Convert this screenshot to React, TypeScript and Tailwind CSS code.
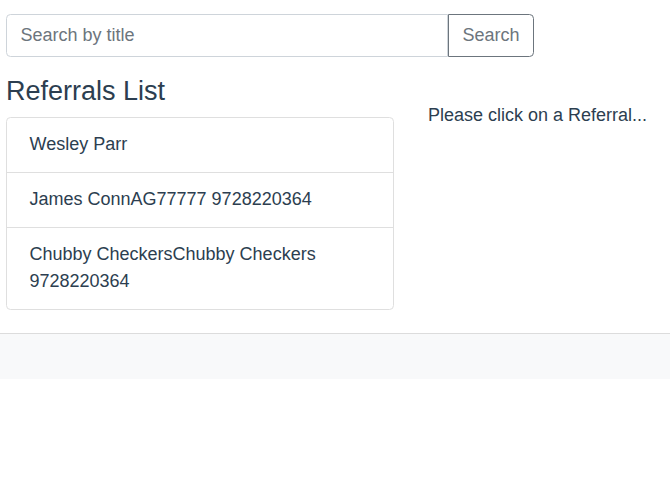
const referrals = [
  "Wesley Parr",
  "James ConnAG77777 9728220364",
  "Chubby CheckersChubby Checkers 9728220364",
];

export default function App() {
  return (
    <div className="min-h-[483px] bg-white text-[18px] leading-[1.5] text-[#2c3e50] font-['Liberation_Sans',Arial,sans-serif]">
      <div className="px-[6px] pt-[14px]">
        {/* search */}
        <div className="flex w-[528px] h-[42.5px]">
          <input
            type="text"
            placeholder="Search by title"
            className="flex-1 min-w-0 px-[13.5px] border border-[#ced4da] rounded-l-[4.5px] text-[18px] text-[#495057] placeholder:text-[#6c757d] outline-none"
          />
          <button className="px-[13.5px] border border-[#6c757d] rounded-r-[4.5px] text-[#6c757d] text-[18px] bg-white">
            Search
          </button>
        </div>

        <div className="flex mt-[18px]">
          <div className="w-[388px]">
            <h4 className="text-[27px] leading-[1.2] font-normal mb-[10px]">Referrals List</h4>
            <ul className="border border-[#dfdfdf] rounded-[4.5px]">
              {referrals.map((r, i) => (
                <li
                  key={r}
                  className={`px-[22.5px] py-[13.5px] ${i > 0 ? "border-t border-[#dfdfdf]" : ""}`}
                >
                  {r}
                </li>
              ))}
            </ul>
          </div>
          <div className="ml-[34px]">
            <br />
            <p>Please click on a Referral...</p>
          </div>
        </div>
      </div>

      {/* footer */}
      <div className="mt-[23px] h-[46px] border-t border-[#dcdcdc] bg-[#f8f9fa]" />
    </div>
  );
}
